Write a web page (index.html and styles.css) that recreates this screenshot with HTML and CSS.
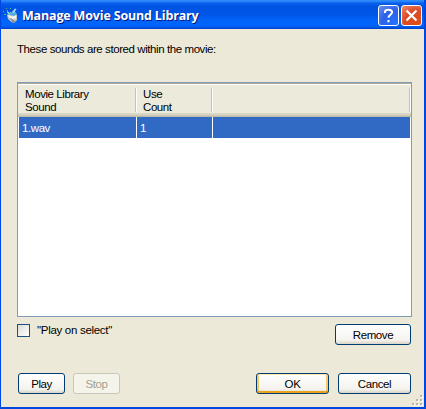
FILE: index.html
```
<!DOCTYPE html>
<html lang="en">
<head>
<meta charset="utf-8">
<title>Manage Movie Sound Library</title>
<link rel="stylesheet" href="styles.css">
</head>
<body>
<div class="window">
  <header class="titlebar">
    <svg class="app-icon" width="16" height="16" viewBox="0 0 16 16">
      <path d="M4 8 8 5l4 1 2 2v5l-2 2.500H9L5 12z" fill="#c9cccb"/>
      <path d="M4 7.500 8 5l4-.5 2 2.500-3 2-4-1z" fill="#4fb0df"/>
      <path d="m5 8 4 1.500 4-1v3l-4 .5-3-1.500z" fill="#f4f4ee"/>
      <path d="m5 11.500 3 1 1 2.500 3 .5 1.500-2-2 .5-3-2.500z" fill="#8e8c91"/>
      <path d="M0 4h1v1H0zM3 1h1v1H3zM4 3h1v1H4zM7 1h1v1H7zM1 7h2v1H1z" fill="#5fae92"/>
      <path d="m9 5 3-3.500 1.500.5L11 6zM4 4l3 2-1 1.500-2-2z" fill="#9fd8ee"/>
    </svg>
    <h1 class="title">Manage Movie Sound Library</h1>
    <button class="caption help" aria-label="Help"><svg width="21" height="21" viewBox="0 0 21 21"><path d="M7 8V6.700C7 5.200 8.500 4.700 10.500 4.700c2.200 0 3.600.8 3.600 2.600 0 2.400-3.600 2.500-3.600 5.400M10.500 15v2.200" fill="none" stroke="#fff" stroke-width="2"/></svg></button>
    <button class="caption close" aria-label="Close"><svg width="21" height="21" viewBox="0 0 21 21"><path d="m5.500 5.500 10 10m0-10-10 10" fill="none" stroke="#fff" stroke-width="2.200"/></svg></button>
  </header>
  <main class="content">
    <p class="intro">These sounds are stored within the movie:</p>
    <div class="list">
      <div class="row head">
        <div class="cell">Movie Library<br>Sound</div>
        <div class="cell">Use<br>Count</div>
        <div class="cell"></div>
      </div>
      <div class="row selected">
        <div class="cell">1.wav</div>
        <div class="cell">1</div>
        <div class="cell"></div>
      </div>
    </div>
    <div class="options">
      <label class="check"><span class="box"></span><span class="check-text">"Play on select"</span></label>
      <button class="btn remove">Remove</button>
    </div>
    <div class="actions">
      <button class="btn small">Play</button>
      <button class="btn small disabled" disabled>Stop</button>
      <button class="btn default">OK</button>
      <button class="btn">Cancel</button>
    </div>
  </main>
  <svg class="grip" width="12" height="12" viewBox="0 0 12 12">
    <path d="M9 1h2v2H9zM5 5h2v2H5zM9 5h2v2H9zM1 9h2v2H1zM5 9h2v2H5zM9 9h2v2H9z" fill="#fff"/>
    <path d="M8 0h2v2H8zM4 4h2v2H4zM8 4h2v2H8zM0 8h2v2H0zM4 8h2v2H4zM8 8h2v2H8z" fill="#b8b4a3"/>
  </svg>
</div>
</body>
</html>
```

FILE: styles.css
```
* { box-sizing: border-box; }
body {
  margin: 0;
  background: #0831d9;
  color: #000;
  font: 11.5px/13px "Liberation Sans", Arial, sans-serif;
  letter-spacing: -.42px;
}
.window {
  position: relative;
  width: 426px;
  height: 409px;
  border: solid #0046e0;
  border-width: 0 2px 2px 1px;
  background: #ece9d8;
  overflow: hidden;
}
.titlebar {
  display: flex;
  height: 29px;
  margin: 0 -2px 0 -1px;
  padding: 5px 4px 0 3px;
  background: linear-gradient(#2e8af8 0, #308bfa 1px, #0a62ee 3px, #0054e3 6px, #0055e5 14px, #0062f8 20px, #0066ff 25px, #005cec 27px, #003dc6 29px);
}
.app-icon { flex: none; margin-top: 2px; }
.title {
  flex: 1;
  margin: 3px 0 0 3px;
  color: #fff;
  font: bold 12.5px/16px "Open Sans", "Noto Sans", sans-serif;
  letter-spacing: -.17px;
  white-space: nowrap;
  text-shadow: 1px 1px #0a1883;
}
.caption {
  width: 21px;
  height: 21px;
  margin-left: 2px;
  padding: 0;
  border: 1px solid #fff;
  border-radius: 3px;
}
.caption svg { display: block; margin: -1px; }
.help { background: radial-gradient(circle at 85% 90%, #2371ff, #2c62e8 55%, #6b92ef); }
.close { background: radial-gradient(circle at 80% 90%, #e24c15, #dc4b27 55%, #ed8c70); }
.content { padding: 14px 13px 0 16px; }
.intro { margin: 0; }
.list {
  width: 395px;
  height: 235px;
  margin-top: 26px;
  border: 1px solid #7f9db9;
  background: #fff;
}
.row {
  display: grid;
  grid-template-columns: 118px 76px 198px;
}
.head {
  height: 34px;
  padding-left: 1px;
  border-top: 1px solid #aca899;
  background: linear-gradient(#fff 1px, #ebeadb 1px, #ebeadb 29px, #dfdcca 29px, #d5d1bf 31px, #b8b4a2 33px);
}
.head .cell {
  height: 24px;
  margin-top: 4px;
  padding-left: 6px;
  border-right: 1px solid #fff;
  box-shadow: inset -1px 0 #c7c5b2;
  line-height: 13px;
}
.selected {
  height: 21px;
  margin-left: 1px;
  color: #fff;
  line-height: 22px;
}
.selected .cell {
  height: 21px;
  padding-left: 3px;
  border-right: 1px solid #fff;
  background: #316ac5;
}
.options { display: flex; margin-top: 7px; }
.check { display: flex; flex: 1; height: 13px; }
.box {
  width: 13px;
  height: 13px;
  border: 1px solid #1c5180;
  background: linear-gradient(135deg, #dcdcd7, #fff);
}
.check-text { margin-left: 7px; letter-spacing: -.3px; }
.btn {
  width: 73px;
  height: 21px;
  margin: 0 0 0 9px;
  padding: 1px 0 0;
  border: 1px solid #003c74;
  border-radius: 3px;
  background: linear-gradient(#fff, #f4f3ee 80%, #d9d3c7);
  color: #000;
  font: inherit;
  letter-spacing: inherit;
}
.options .btn { width: 76px; }
.actions { display: flex; margin-top: 28px; }
.actions .small { width: 47px; margin-left: 8px; }
.actions .small:first-child { margin-left: 1px; }
.actions .disabled {
  border-color: #c9c7ba;
  background: #f5f4ea;
  color: #a1a192;
}
.actions .default {
  margin-left: auto;
  box-shadow: inset 0 1px #ffe7ad, inset 0 -2px #eba31d, inset 2px 0 #fbc761, inset -2px 0 #fbc761;
}
.grip { position: absolute; right: 0; bottom: 0; }
```
